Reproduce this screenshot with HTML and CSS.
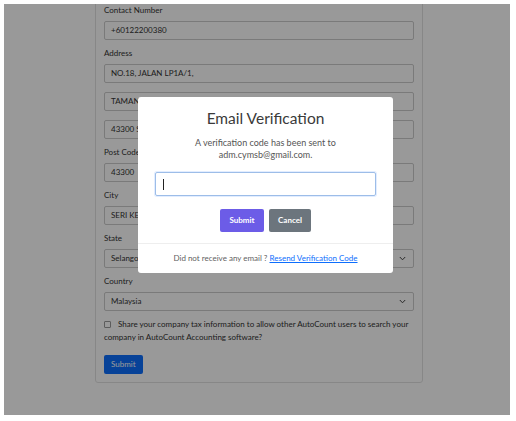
FILE: index.html
```html
<!DOCTYPE html>
<html>
<head>
<meta charset="utf-8">
<link rel="stylesheet" href="styles.css">
</head>
<body>
<div class="frame">
  <div class="page">
    <div class="card">
      <div class="group">
        <div class="label">Contact Number</div>
        <div class="field">+60122200380</div>
      </div>
      <div class="group">
        <div class="label">Address</div>
        <div class="field stack">NO.18, JALAN LP1A/1,</div>
        <div class="field stack">TAMAN LESTARI PUTRA,</div>
        <div class="field">43300 SERI KEMBANGAN</div>
      </div>
      <div class="group">
        <div class="label">Post Code</div>
        <div class="field">43300</div>
      </div>
      <div class="group">
        <div class="label">City</div>
        <div class="field">SERI KEMBANGAN</div>
      </div>
      <div class="group">
        <div class="label">State</div>
        <div class="field select"><span>Selangor</span><svg class="chev" width="7" height="5" viewBox="0 0 7 5"><path d="M0.8 1 L3.5 3.8 L6.2 1" fill="none" stroke="#444" stroke-width="1"/></svg></div>
      </div>
      <div class="group">
        <div class="label">Country</div>
        <div class="field select"><span>Malaysia</span><svg class="chev" width="7" height="5" viewBox="0 0 7 5"><path d="M0.8 1 L3.5 3.8 L6.2 1" fill="none" stroke="#444" stroke-width="1"/></svg></div>
      </div>
      <p class="check"><span class="box"></span>Share your company tax information to allow other AutoCount users to search your company in AutoCount Accounting software?</p>
      <div class="actions"><span class="btn-primary">Submit</span></div>
    </div>
  </div>
  <div class="backdrop"></div>
  <div class="modal">
    <div class="modal-body">
      <h2 class="title">Email Verification</h2>
      <p class="desc">A verification code has been sent to<br>adm.cymsb@gmail.com.</p>
      <div class="code-input"><span class="caret"></span></div>
      <div class="buttons">
        <span class="btn btn-submit">Submit</span>
        <span class="btn btn-cancel">Cancel</span>
      </div>
    </div>
    <div class="modal-footer">Did not receive any email ? <a class="resend" href="#">Resend Verification Code</a></div>
  </div>
</div>
</body>
</html>
```
FILE: styles.css
```css
html { background: #fff; }
body {
  margin: 0;
  font-family: "Segoe UI", Lato, "Liberation Sans", sans-serif;
}
.frame {
  margin: 4px 0 0 4px;
  width: 506px;
  height: 411px;
  overflow: hidden;
  position: relative;
  background: #fff;
}
.page {
  padding-left: 91px;
}
.card {
  width: 310px;
  margin-top: -20px;
  padding: 19px 8px 8px 8px;
  border: 1px solid #e2e2e2;
  border-radius: 3px;
  background: #fff;
  color: #212529;
}
.group {
  margin-bottom: 7px;
}
.label {
  font-size: 8px;
  line-height: 12px;
  margin-bottom: 5px;
  color: #333;
}
.field {
  box-sizing: border-box;
  height: 19px;
  border: 1px solid #ccc;
  border-radius: 2px;
  padding: 0 6px;
  font-size: 8px;
  line-height: 17px;
  color: #333;
  background: #fff;
  display: flex;
  align-items: center;
}
.field.stack {
  margin-bottom: 9px;
}
.select {
  justify-content: space-between;
}
.chev {
  margin-right: 1px;
}
.check {
  margin: 5px 0 11px 0;
  font-size: 8px;
  line-height: 13px;
  color: #333;
}
.box {
  display: inline-block;
  width: 5px;
  height: 5px;
  border: 1px solid #999;
  border-radius: 1px;
  margin-right: 7px;
  vertical-align: -0.5px;
}
.actions {
  display: flex;
}
.btn-primary {
  display: inline-block;
  height: 19px;
  line-height: 19px;
  padding: 0 7px;
  font-size: 8px;
  color: #fff;
  background: #0d6efd;
  border-radius: 2px;
}
.backdrop {
  position: absolute;
  inset: 0;
  background: rgba(0, 0, 0, 0.4);
}
.modal {
  position: absolute;
  left: 134px;
  top: 93px;
  width: 255px;
  background: #fff;
  border-radius: 3px;
}
.modal-body {
  padding: 11px 17px 11px 17px;
  display: flex;
  flex-direction: column;
  align-items: stretch;
}
.title {
  margin: 0;
  text-align: center;
  font-size: 15.5px;
  line-height: 20px;
  font-weight: 400;
  color: #3a3a3a;
}
.desc {
  margin: 9px 0 11px 0;
  text-align: center;
  font-size: 9px;
  line-height: 12px;
  color: #555;
}
.code-input {
  box-sizing: border-box;
  height: 24px;
  border: 1px solid #9dbde8;
  border-radius: 2px;
  box-shadow: 0 0 0 1px rgba(13, 110, 253, 0.12);
  display: flex;
  align-items: center;
  padding-left: 7px;
}
.caret {
  width: 1px;
  height: 11px;
  background: #222;
}
.buttons {
  margin-top: 13px;
  display: flex;
  justify-content: center;
  gap: 5px;
}
.btn {
  display: inline-block;
  height: 23px;
  line-height: 23px;
  border-radius: 2px;
  font-size: 8px;
  font-weight: 700;
  color: #fff;
  text-align: center;
}
.btn-submit {
  width: 44px;
  background: #6c5ce7;
}
.btn-cancel {
  width: 42px;
  background: #6c757d;
}
.modal-footer {
  border-top: 1px solid #eee;
  padding: 8px 0 9px 0;
  text-align: center;
  font-size: 8px;
  line-height: 12px;
  color: #5f5f5f;
}
.resend {
  color: #0d6efd;
  text-decoration: underline;
}
```
